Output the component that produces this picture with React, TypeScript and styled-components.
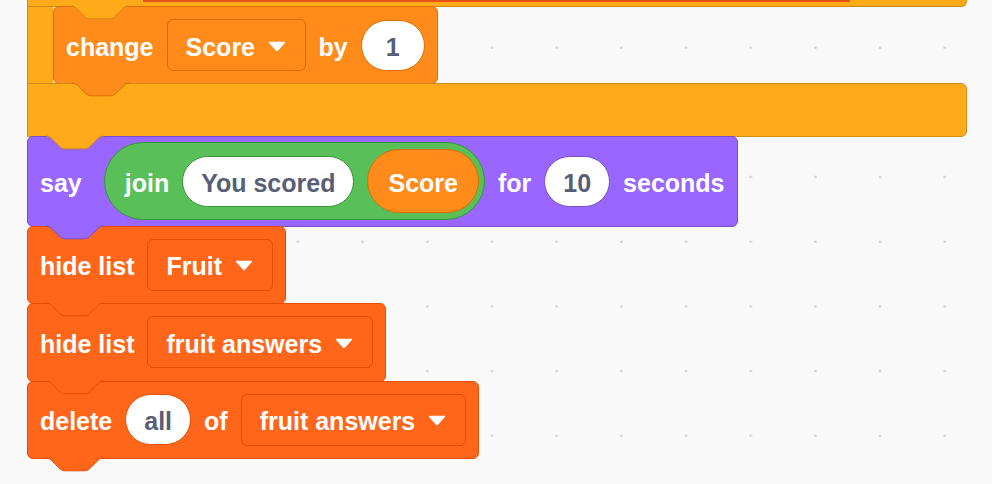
import React from 'react'
import styled, { createGlobalStyle } from 'styled-components'

type Palette = { fill: string; edge: string }

const palette: Record<string, Palette> = {
  control: { fill: '#FFAB19', edge: '#CF8B17' },
  variables: { fill: '#FF8C1A', edge: '#DB6E00' },
  looks: { fill: '#9966FF', edge: '#774DCB' },
  operators: { fill: '#59C059', edge: '#389438' },
  lists: { fill: '#FF661A', edge: '#E64D00' },
}

const GlobalStyle = createGlobalStyle`
  html, body {
    margin: 0;
    height: 100%;
    overflow: hidden;
  }
  body {
    background-color: #f9f9f9;
    background-image: radial-gradient(circle at 39.1px 47.7px, #d4d4d4 1.1px, transparent 1.7px);
    background-size: 64.7px 64.7px;
    font-family: 'Liberation Sans', Arial, Helvetica, sans-serif;
  }
`

const Workspace = styled.div`
  display: flex;
  flex-direction: column;
  align-items: flex-start;
  padding-left: 27px;
  min-height: 100vh;
  box-sizing: border-box;
`

const StackBlock = styled.div<{ $c: Palette; $h?: number; $first?: boolean }>`
  position: relative;
  display: flex;
  align-items: center;
  gap: 13px;
  box-sizing: border-box;
  height: ${(p) => p.$h ?? 78.5}px;
  padding: 0 12px;
  background: ${(p) => p.$c.fill};
  border: 1px solid ${(p) => p.$c.edge};
  border-radius: 6px;
  margin-top: ${(p) => (p.$first ? 0 : -1)}px;
`

const Label = styled.span`
  color: #fff;
  font-size: 25px;
  font-weight: 700;
  line-height: 1;
  padding-top: 4px;
  white-space: nowrap;
`

const Dropdown = styled.div<{ $c: Palette }>`
  display: inline-flex;
  align-items: center;
  gap: 12.5px;
  box-sizing: border-box;
  height: 52px;
  padding: 0 19px 0 18px;
  background: ${(p) => p.$c.fill};
  border: 1px solid ${(p) => p.$c.edge};
  border-radius: 6px;
`

const TextSlot = styled.div<{ $edge: string }>`
  display: inline-flex;
  align-items: center;
  justify-content: center;
  box-sizing: border-box;
  height: 51px;
  min-width: 64px;
  padding: 4px 18px 0;
  background: #fff;
  border: 1px solid ${(p) => p.$edge};
  border-radius: 26px;
  color: #575e75;
  font-size: 25px;
  font-weight: 700;
  line-height: 1;
  white-space: nowrap;
`

const Reporter = styled.div<{ $c: Palette }>`
  display: inline-flex;
  align-items: center;
  gap: 13px;
  box-sizing: border-box;
  height: 78px;
  margin-left: 9px;
  padding: 0 5px 0 20px;
  background: ${(p) => p.$c.fill};
  border: 1px solid ${(p) => p.$c.edge};
  border-radius: 39px;
`

const VarReporter = styled.div<{ $c: Palette }>`
  display: inline-flex;
  align-items: center;
  box-sizing: border-box;
  height: 64px;
  padding: 0 20px;
  background: ${(p) => p.$c.fill};
  border: 1px solid ${(p) => p.$c.edge};
  border-radius: 32px;
`

const CBlock = styled.div`
  display: flex;
  flex-direction: column;
  width: 940px;
`

const CArmTop = styled.div<{ $c: Palette }>`
  position: relative;
  box-sizing: border-box;
  height: 7px;
  background: ${(p) => p.$c.fill};
  border: 1px solid ${(p) => p.$c.edge};
  border-top: none;
  border-radius: 0 0 6px 0;
`

const ConditionEdge = styled.div`
  width: 707px;
  height: 2px;
  margin-left: 115px;
  background: #e8531a;
`

const CMouth = styled.div`
  display: flex;
  align-items: stretch;
  margin-top: -1px;
`

const CSpine = styled.div<{ $c: Palette }>`
  width: 25px;
  background: ${(p) => p.$c.fill};
  border-left: 1px solid ${(p) => p.$c.edge};
`

const CArmBottom = styled.div<{ $c: Palette }>`
  position: relative;
  box-sizing: border-box;
  height: 53.5px;
  margin-top: -1px;
  background: ${(p) => p.$c.fill};
  border: 1px solid ${(p) => p.$c.edge};
  border-radius: 0 6px 6px 0;
`

const TabSvg = styled.svg<{ $left: number }>`
  position: absolute;
  top: 100%;
  left: ${(p) => p.$left}px;
  z-index: 2;
  overflow: visible;
`

const ArrowSvg = styled.svg`
  flex: none;
  display: block;
  margin-top: 2px;
`

// the little tab under a stack block, scratch units scaled by 1.6
const Tab = ({ c, left = 18.2 }: { c: Palette; left?: number }) => (
  <TabSvg $left={left} width={57.6} height={12.8} viewBox="0 0 36 8">
    <path
      d="M0,0 c2,0 3,1 4,2 l4,4 c1,1 2,2 4,2 h12 c2,0 3,-1 4,-2 l4,-4 c1,-1 2,-2 4,-2"
      fill={c.fill}
      stroke={c.edge}
      strokeWidth={1}
      vectorEffect="non-scaling-stroke"
    />
  </TabSvg>
)

const Arrow = () => (
  <ArrowSvg width={18} height={11} viewBox="0 0 18 11">
    <path
      d="M1.6,0.8 H16.4 Q17.9,0.8 16.9,2.1 L10.2,9.6 Q9,10.8 7.8,9.6 L1.1,2.1 Q0.1,0.8 1.6,0.8 Z"
      fill="#fff"
    />
  </ArrowSvg>
)

const Menu = ({ c, children }: { c: Palette; children: React.ReactNode }) => (
  <Dropdown $c={c}>
    <Label>{children}</Label>
    <Arrow />
  </Dropdown>
)

export default function App() {
  const { control, variables, looks, operators, lists } = palette

  return (
    <>
      <GlobalStyle />
      <Workspace>
        <CBlock>
          <CArmTop $c={control}>
            <ConditionEdge />
            <Tab c={control} left={43.2} />
          </CArmTop>
          <CMouth>
            <CSpine $c={control} />
            <StackBlock $c={variables} $h={78} $first>
              <Label>change</Label>
              <Menu c={variables}>Score</Menu>
              <Label>by</Label>
              <TextSlot $edge={variables.edge}>1</TextSlot>
              <Tab c={variables} />
            </StackBlock>
          </CMouth>
          <CArmBottom $c={control}>
            <Tab c={control} />
          </CArmBottom>
        </CBlock>

        <StackBlock $c={looks} $h={91}>
          <Label>say</Label>
          <Reporter $c={operators}>
            <Label>join</Label>
            <TextSlot $edge={operators.edge}>You scored</TextSlot>
            <VarReporter $c={variables}>
              <Label>Score</Label>
            </VarReporter>
          </Reporter>
          <Label>for</Label>
          <TextSlot $edge={looks.edge}>10</TextSlot>
          <Label>seconds</Label>
          <Tab c={looks} />
        </StackBlock>

        <StackBlock $c={lists}>
          <Label>hide list</Label>
          <Menu c={lists}>Fruit</Menu>
          <Tab c={lists} />
        </StackBlock>

        <StackBlock $c={lists}>
          <Label>hide list</Label>
          <Menu c={lists}>fruit answers</Menu>
          <Tab c={lists} />
        </StackBlock>

        <StackBlock $c={lists}>
          <Label>delete</Label>
          <TextSlot $edge={lists.edge}>all</TextSlot>
          <Label>of</Label>
          <Menu c={lists}>fruit answers</Menu>
          <Tab c={lists} />
        </StackBlock>
      </Workspace>
    </>
  )
}
